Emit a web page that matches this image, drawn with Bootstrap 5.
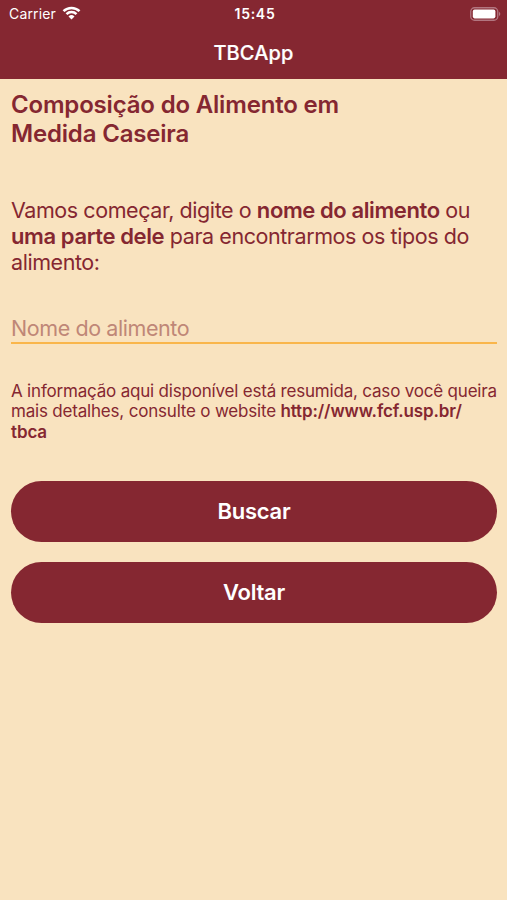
<!DOCTYPE html>
<html lang="pt-BR">
<head>
<meta charset="utf-8">
<meta name="viewport" content="width=device-width, initial-scale=1">
<title>TBCApp</title>
<link href="https://cdn.jsdelivr.net/npm/bootstrap@5.3.0/dist/css/bootstrap.min.css" rel="stylesheet">
<style>
:root{--wine:#852731;--cream:#f9e3bf}
body{font-family:Inter,sans-serif;background:var(--cream);color:var(--wine);min-height:100vh;overflow:hidden}
.app-head{background:var(--wine);height:79px}
.status-row{height:27px;padding:0 6px 0 9px;display:grid;grid-template-columns:1fr auto 1fr}
.clock{font-weight:600;font-size:14px;letter-spacing:.7px}
.carrier{font-size:14px;letter-spacing:.15px}
.wifi{margin-left:6px;margin-top:-2px}
.app-title{font-size:20px;line-height:24px;font-weight:500;margin-top:14px;letter-spacing:.15px;-webkit-text-stroke:.2px}
main{padding:11px 10px 0 11px}
h1{font-size:24px;line-height:29px;font-weight:600;letter-spacing:-.18px;margin:0 0 49px}
.intro{font-size:21.5px;line-height:26px;letter-spacing:-.43px;margin:0 0 40px}
.intro b{font-weight:600;font-size:22px;line-height:1;letter-spacing:-.4px}
.note b{font-weight:600;letter-spacing:-.12px}
.food-input.form-control{height:28.5px;border:0;border-bottom:2px solid #fab64b;border-radius:0;background:transparent;padding:0;font-size:21.5px;letter-spacing:-.42px;color:var(--wine)}
.food-input::placeholder{color:#bf8777;opacity:1}
.note{font-size:17px;line-height:20.4px;letter-spacing:-.195px;margin:37.3px 0 39px}
.pill{height:61px;background:var(--wine);color:#fff;font-size:22px;font-weight:600;letter-spacing:-.25px;border:0}
.pill:hover{background:#6f1f2a;color:#fff}
.actions{gap:20px}
</style>
</head>
<body>
<header class="app-head text-white">
<div class="status-row align-items-center">
<div class="d-flex align-items-center carrier">Carrier
<svg class="wifi" width="19" height="14" viewBox="0 0 18 14" fill="none" stroke="#fff" stroke-width="2.5"><path d="M1 5.2a11.3 11.3 0 0 1 16 0M4 8.2a7 7 0 0 1 10 0"/><path d="M9 13.5 6 10.4a4.3 4.3 0 0 1 6 0Z" fill="#fff" stroke="none"/></svg></div>
<div class="clock">15:45</div>
<svg class="ms-auto" width="31" height="14" viewBox="0 0 31 14"><rect x=".75" y=".75" width="27" height="12.5" rx="3.8" fill="none" stroke="#b27680" stroke-width="1.3"/><rect x="2.8" y="2.6" width="22.6" height="8.8" rx="1.8" fill="#fff"/><path d="M29 4.8q2.6 2.2 0 4.4z" fill="#b27680"/></svg>
</div>
<div class="app-title text-center">TBCApp</div>
</header>
<main>
<h1>Composição do Alimento em<br>Medida Caseira</h1>
<p class="intro text-nowrap">Vamos começar, digite o <b>nome do alimento</b> ou<br><b>uma parte dele</b> para encontrarmos os tipos do<br>alimento:</p>
<input class="form-control food-input shadow-none" type="text" placeholder="Nome do alimento" aria-label="Nome do alimento">
<p class="note text-nowrap">A informação aqui disponível está resumida, caso você queira<br>mais detalhes, consulte o website <b>http://www.fcf.usp.br/<br>tbca</b></p>
<div class="d-grid actions">
<button class="btn pill rounded-pill" type="button">Buscar</button>
<button class="btn pill rounded-pill" type="button">Voltar</button>
</div>
</main>
<script src="https://cdn.jsdelivr.net/npm/bootstrap@5.3.0/dist/js/bootstrap.bundle.min.js"></script>
</body>
</html>
